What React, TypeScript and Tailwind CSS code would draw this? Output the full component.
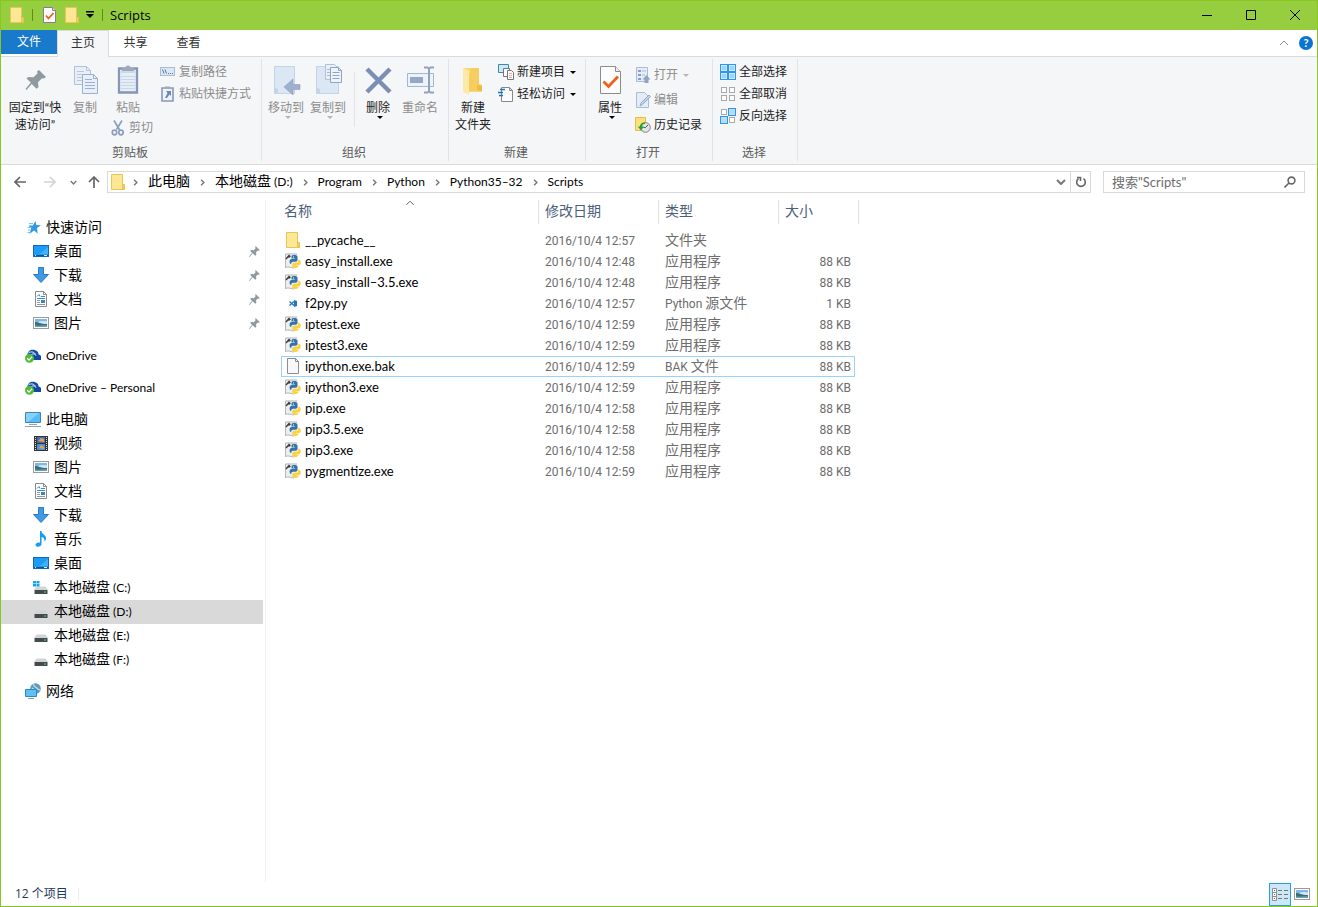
import React from "react";

type IconProps = { className?: string };

/* ---------- shared icons ---------- */

const Folder = ({ className = "w-4 h-4" }: IconProps) => (
  <svg className={className} viewBox="0 0 16 16">
    <path d="M1.500.5h11v10l2 .5v4.500h-13z" fill="#fde694" stroke="#e9c558" />
    <path d="M12.500 15v-5l2 .6V15z" fill="#f5d061" stroke="#e0b840" strokeWidth=".6" />
  </svg>
);

const CheckDoc = ({ className }: IconProps) => (
  <svg className={className} viewBox="0 0 13 16">
    <path d="M.5.5h9l3 3v12H.5z" fill="#fcfcfc" stroke="#8a7a9a" />
    <path d="M9.500.5v3h3" fill="#e8e8e8" stroke="#8a7a9a" />
    <path d="M3 8.500l2.500 3L10.500 6" fill="none" stroke="#f05a1a" strokeWidth="1.800" />
  </svg>
);

const Pin = ({ className }: IconProps) => (
  <svg className={className} viewBox="0 0 20 20" fill="#8f9aa0">
    <path d="M12 0l8 7.500-2.500 1-1.500-.3-3.200 3.300.5 4.700-1.800 1.500-4.700-4.600L1.200 20 0 19l5.500-6.500L2 8.800l2-1.600 4.700.3L12 4.200 11.500 2z" />
  </svg>
);

const Caret = ({ className = "text-black" }: IconProps) => (
  <svg className={`w-[6px] h-[3px] shrink-0 ${className}`} viewBox="0 0 6 3">
    <path d="M0 0h6L3 3z" fill="currentColor" />
  </svg>
);

const Chevron = ({ className }: IconProps) => (
  <svg className={className} viewBox="0 0 10 6" fill="none" stroke="currentColor">
    <path d="M1 1l4 4 4-4" />
  </svg>
);

const Picture = () => (
  <svg className="w-4 h-4" viewBox="0 0 16 16">
    <rect x=".5" y="2.500" width="15" height="11" fill="#fff" stroke="#9a9a9a" />
    <path d="M2 4h12v4H2z" fill="#7db8ee" />
    <path d="M6 6.500c3-1 6-.5 8 0V9H6z" fill="#d3e7f7" />
    <path d="M2 7c3 0 5 2 12 2v3H2z" fill="#3f6f6b" />
    <path d="M2 10.500c4 .5 8-.5 12 0V12H2z" fill="#6aa0b8" />
  </svg>
);

/* ---------- ribbon icons ---------- */

const page = { fill: "#e9eff8", stroke: "#b3c1d8" };

const BigPin = () => (
  <svg className="w-8 h-8" viewBox="0 0 32 32" fill="#8f9aa0">
    <path d="M20 6l7 7-2 1.500-2-.3-4 4 .5 5-2 1.500-4.800-4.700L7.500 26 6.500 25l5.300-6.500-4.300-4 1.700-1.600 5.300.3 4-3.700-.5-2z" />
  </svg>
);

const BigCopy = () => (
  <svg className="w-8 h-8" viewBox="0 0 32 32">
    <path d="M5.500 2.500h12l4 4v14h-16z" {...page} />
    <path d="M17.500 2.500v4h4M8 7.500h7M8 10.500h10M8 13.500h10M8 16.500h10" fill="none" stroke="#b9c7dc" />
    <path d="M13.500 10.500h11l4 4v15h-15z" fill="#e9eff8" stroke="#9bb0ce" />
    <path d="M24.500 10.500v4h4M16 15.500h7M16 18.500h10M16 21.500h10M16 24.500h10" fill="none" stroke="#9bb0ce" />
  </svg>
);

const BigPaste = () => (
  <svg className="w-8 h-8" viewBox="0 0 32 32">
    <path d="M7 4.500h18v24H7z" fill="#e6edf7" stroke="#8497b8" strokeWidth="2.300" />
    <path d="M9 12.500h14M9 15.500h14M9 18.500h14M9 21.500h14M9 24.500h14" stroke="#c8d6ea" />
    <path d="M10 7V4h3.500a2.500 2.500 0 0 1 5 0H22v3z" fill="#9faab9" />
    <path d="M9 8h14" stroke="#b8c3d3" />
  </svg>
);

const Scissors = () => (
  <svg className="w-4 h-4" viewBox="0 0 16 16" fill="none" stroke="#8c9fbd">
    <path d="M4 .5l6 10M12 .5L6.500 9.500" strokeWidth="1.700" />
    <ellipse cx="4.500" cy="12.500" rx="2.200" ry="2.300" strokeWidth="1.700" />
    <ellipse cx="11" cy="12.500" rx="2.200" ry="2.300" strokeWidth="1.700" />
  </svg>
);

const CopyPath = () => (
  <svg className="w-4 h-4" viewBox="0 0 16 16">
    <rect x=".5" y="3.500" width="14" height="8" fill="#dce7f5" stroke="#a9bbd6" />
    <path d="M2.500 5.500l1.500 4M5 5.500l1.500 4M8 9.500h1M10 9.500h1M12 9.500h1" fill="none" stroke="#5f7599" />
  </svg>
);

const PasteShortcut = () => (
  <svg className="w-4 h-4" viewBox="0 0 16 16">
    <path d="M2 2h11v13H2z" fill="#eef3fa" stroke="#869abb" strokeWidth="1.600" />
    <path d="M5 .5h5v2H5z" fill="#9faab9" />
    <path d="M6 5h5v5L9.500 8.500 7 12H5l2.500-5z" fill="#6f88b0" />
  </svg>
);

const BigMove = () => (
  <svg className="w-8 h-8" viewBox="0 0 32 32">
    <path d="M4.500 2.500h20v27h-20z" fill="#dce7f5" stroke="#c3d3e8" />
    <path d="M5 24l3 1v4H5z" fill="#c3d3e8" />
    <path d="M30 20.500h-7V15l-9 8 9 8v-5.500h7z" fill="#9db0cc" stroke="#8ba0c0" strokeWidth=".6" />
  </svg>
);

const BigCopyTo = () => (
  <svg className="w-8 h-8" viewBox="0 0 32 32">
    <path d="M4.500 2.500h22v27h-22z" fill="#dce7f5" stroke="#c3d3e8" />
    <path d="M5 24l3 1v4H5z" fill="#c3d3e8" />
    <path d="M13.500.5h9l3 3v12h-12z" {...page} />
    <path d="M15 5.500h5M15 8.500h5M15 11.500h5" stroke="#a9b9d2" />
    <path d="M18.500 3.500h8l3 3v12h-11z" fill="#eef3fa" stroke="#8fa5c6" />
    <path d="M26.500 3.500v3h3M20.500 8.500h7M20.500 11.500h7M20.500 14.500h7" fill="none" stroke="#8fa5c6" />
  </svg>
);

const BigDelete = () => (
  <svg className="w-8 h-8" viewBox="0 0 32 32">
    <path d="M5 5l23 23M28 5L5 28" stroke="#7b8fb4" strokeWidth="4.500" />
  </svg>
);

const BigRename = () => (
  <svg className="w-8 h-8" viewBox="0 0 32 32" fill="none">
    <path d="M3.500 9.500h26v13h-26z" fill="#edf2f9" stroke="#a3b6d2" />
    <path d="M6 13h13v6H6z" fill="#93a8c8" />
    <path d="M20 3.500h3.500l1.500 1 1.500-1H30M20 28.500h3.500l1.500-1 1.500 1H30M25 4v24" stroke="#8ea2c1" strokeWidth="2" />
  </svg>
);

const BigFolder = () => (
  <svg className="w-8 h-8" viewBox="0 0 32 32">
    <path d="M6 4h16v16l3 1v7H6z" fill="#f9d775" />
    <path d="M14 4h8v16l3 1v6H10z" fill="#f7cd62" />
    <path d="M6 4l6 3v24l-6-3z" fill="#fdeaa8" />
    <path d="M20 26v-5l5 1v5z" fill="#eebc45" />
  </svg>
);

const NewItem = () => (
  <svg className="w-4 h-4" viewBox="0 0 16 16">
    <path d="M.5.5h10v8H.5z" fill="#cbe8f7" stroke="#3d87a8" />
    <path d="M5.500 4.500h6v8h-6z" fill="#fff" stroke="#777" />
    <path d="M9.500 6.500h4l2 2v7h-6z" fill="#fff" stroke="#777" />
    <path d="M11 9.500h3M11 11.500h3M11 13.500h3" stroke="#e9a4a4" />
  </svg>
);

const EasyAccess = () => (
  <svg className="w-4 h-4" viewBox="0 0 16 16">
    <path d="M3.500 1.500h8l3 3v11h-11z" fill="#fcfcfc" stroke="#888" />
    <path d="M11.500 1.500v3h3" fill="none" stroke="#888" />
    <path d="M2 3.500h5M0 6.500h5M1 9.500h4" stroke="#1f76bd" strokeWidth="1.400" />
  </svg>
);

const BigProps = () => (
  <svg className="w-8 h-8" viewBox="0 0 32 32">
    <path d="M6.500 2.500h15l5 5v22h-20z" fill="#fdfdfd" stroke="#8c8c8c" />
    <path d="M21.500 2.500v5h5" fill="#eee" stroke="#8c8c8c" />
    <path d="M9.500 17.500l5 5L24 12.500" fill="none" stroke="#f0601c" strokeWidth="2.800" />
  </svg>
);

const OpenItem = () => (
  <svg className="w-4 h-4" viewBox="0 0 16 16">
    <path d="M1.500.5h11v14h-11z" fill="#e4ecf7" stroke="#a9bbd6" />
    <path d="M3 3h3v2H3zM3 7h3v2H3zM3 11h3v2H3z" fill="#8ba0c0" />
    <path d="M7 4h4M7 8h3" stroke="#a9bbd6" />
    <path d="M9.500 16v-3.500H7.500L11.500 8l4 4.500h-2V16z" fill="#90a5c5" />
  </svg>
);

const EditItem = () => (
  <svg className="w-4 h-4" viewBox="0 0 16 16">
    <path d="M1.500.5h8l4 4v11h-12z" fill="#e4ecf7" stroke="#a9bbd6" />
    <path d="M5 14l1-3 8-8 1.500 1.500-8 8z" fill="#c4d2e6" stroke="#97abc9" />
  </svg>
);

const HistoryItem = () => (
  <svg className="w-4 h-4" viewBox="0 0 16 16">
    <path d="M.5.5h10v13H.5z" fill="#fbe07c" stroke="#e3bd4d" />
    <circle cx="10.500" cy="10.500" r="4.800" fill="#e2e4e6" stroke="#7e8489" />
    <path d="M10.500 10.500l2.500-2.500M10.500 10.500h-2" stroke="#555" />
    <path d="M10 5.500C6.500 5.500 5 7.500 5 9.500H2.800L6 13.500l3-4H7.200C7.200 8 8 7 10 6.800z" fill="#22a52d" />
  </svg>
);

// each select icon is a 2x2 board, the listed cells are highlighted
const SelectBoard = ({ on, full }: { on: number[]; full?: boolean }) => (
  <svg className="w-4 h-4" viewBox="0 0 16 16">
    {full && <path d="M0 0h16v16H0z" fill="#2f96e8" />}
    {[0, 1, 2, 3].map((i) => {
      const x = (i % 2) * 8;
      const y = i > 1 ? 8 : 0;
      if (full) return <rect key={i} x={x + 1.5} y={y + 1.5} width="5" height="5" fill="#9dd3fb" stroke="#cbe8ff" />;
      return on.includes(i) ? (
        <rect key={i} x={x + 0.5} y={y + 0.5} width="7" height="7" fill="#b5defd" stroke="#2f96e8" />
      ) : (
        <rect key={i} x={x + 1.5} y={y + 1.5} width="5" height="5" fill="#fff" stroke="#a9a9a9" />
      );
    })}
  </svg>
);

/* ---------- navigation icons ---------- */

const Star = () => (
  <svg className="w-4 h-4" viewBox="0 0 16 16">
    <path d="M10.500 2l.8 4 4.700.3-4 2.700.7 5.500-3.700-3-4.500 3.500 1.700-5.400L3.500 6.500h4.300z" fill="#2f9be6" />
    <path d="M4 4.500h4M2.500 8.500h4M3 11h3M2.500 13.500h3" stroke="#7cc3f3" />
  </svg>
);

const Desktop = () => (
  <svg className="w-4 h-4" viewBox="0 0 16 16">
    <rect x=".5" y="2.500" width="15" height="11" fill="#1b9cf6" stroke="#0d6cb8" />
    <path d="M7 11L15 4v7z" fill="#43b0fa" />
    <path d="M1 12.500h14" stroke="#0b568f" />
    <path d="M2 12.500h1M11 12.500h3" stroke="#d6eefd" />
  </svg>
);

const Download = () => (
  <svg className="w-4 h-4" viewBox="0 0 16 16">
    <path d="M5.500.5h5v7h5L8 15.500.5 7.500h5z" fill="#3f9ae3" stroke="#2c7cc4" />
  </svg>
);

const Doc = () => (
  <svg className="w-4 h-4" viewBox="0 0 16 16">
    <path d="M2.500.5h8l3 3v12h-11z" fill="#fff" stroke="#8a8a8a" />
    <path d="M10.500.5v3h3" fill="none" stroke="#8a8a8a" />
    <path d="M4 5.500l2-2 1 2M8 5.500h4M4 7.500h8" fill="none" stroke="#2f8fd8" />
    <path d="M4 9.500h3M4 11.500h3M4 13.500h8" stroke="#8a9aa8" />
    <path d="M8 9h4v3H8z" fill="#4382b5" />
  </svg>
);

const Cloud = () => (
  <svg className="w-4 h-4" viewBox="0 0 16 16">
    <path d="M2.500 8C2.500 4 6 2 9.500 3c3 .5 4 2.500 4 4.500 3 .5 3.500 3 2.500 5.500H5z" fill="#0f4aa8" />
    <path d="M3.500 6C6 4 9.500 5 10.500 7.500M6 8c2-2 4-1 5 .5" fill="none" stroke="#fff" />
    <circle cx="4.500" cy="11.300" r="4.500" fill="#4fbb34" />
    <path d="M2.200 11.300l1.800 1.800 3-3.300" fill="none" stroke="#fff" strokeWidth="1.400" />
  </svg>
);

const Computer = () => (
  <svg className="w-4 h-4" viewBox="0 0 16 16">
    <path d="M.5 1.500h15v10H.5z" fill="#55bcf7" stroke="#3c85b4" />
    <path d="M1 2h13L3 11H1z" fill="#86d2fb" />
    <path d="M4 13.500h8M0 15.500h16" stroke="#93a2ae" />
  </svg>
);

const Video = () => (
  <svg className="w-4 h-4" viewBox="0 0 16 16">
    <path d="M1 1h14v15H1z" fill="#333" />
    <path d="M4 2h8v6H4z" fill="#4a68c8" />
    <path d="M4 9h8v6H4z" fill="#4f8fe0" />
    <path d="M5 6l3-3 3 1v3zM6 13l2-3 3 2v2z" fill="#e0a53a" />
    <path d="M2.500 2v13M13.500 2v13" stroke="#ddd" strokeDasharray="1 1" />
  </svg>
);

const Music = () => (
  <svg className="w-4 h-4" viewBox="0 0 16 16" fill="#159cf5">
    <path d="M7 0h1.500c0 3.500 5 4 4.500 7.500 0 1.500-1 2.500-1.500 3 .3-3-1-4-3-4.500V13C8.500 16 3 17 2.500 14c0-2 2.500-3 4.500-2.300z" />
  </svg>
);

const Drive = ({ win }: { win?: boolean }) => (
  <svg className="w-4 h-4" viewBox="0 0 16 16">
    <path d="M3.500 7.500h9L15 11H1z" fill="#d2d5d8" />
    <path d="M1.500 11h13v4h-13z" fill="#454a4e" />
    <path d="M11 12.500h2v1h-2z" fill="#41e05a" />
    {win && <path d="M0 2h3v2.500H0zM3.500 2h3v2.500h-3zM0 5h3v2.500H0zM3.500 5h3v2.500h-3z" fill="#12a5ee" />}
  </svg>
);

const Network = () => (
  <svg className="w-4 h-4" viewBox="0 0 16 16">
    <circle cx="10.500" cy="5.500" r="5.300" fill="#5d9bbd" />
    <path d="M8 1.500c2 1 1 2 3 3s2 3 4 2M7 5l3 3" fill="none" stroke="#c5dfec" strokeWidth="1.300" />
    <path d="M.5 6.500h11v7H.5z" fill="#5ec0f8" stroke="#2f86bd" />
    <path d="M3 15.500h6" stroke="#8ba0ae" />
  </svg>
);

/* ---------- file icons ---------- */

const PythonExe = () => (
  <svg className="w-4 h-4" viewBox="0 0 16 16">
    <path d="M0 .5h12.500V15L6 14l-6 .5z" fill="#eceeef" />
    <path d="M.5 14.500V1H12M0 14.500c4-1.500 6 .5 9 .5" fill="none" stroke="#b4b8bb" />
    <path d="M1 6l3.500-4M3.500 4.500l2-1.500" stroke="#3c3c3c" strokeWidth="1.400" />
    <path d="M6.500 3.500c0-2 6-2 6 .3V7c0 1.300-.8 1.700-2 1.700H8c-1.500 0-1.800 1-1.800 2.300C4 11 4 6 6.500 6H10v-.6H6.500z" fill="#3572a5" />
    <path d="M13.300 6.500c3.200 0 3.200 5.500.4 5.500h-3v.6h3c0 3-6.500 3-6.500.3 0-2 .5-3.200 2-3.200h2.500c1.300 0 1.600-1 1.600-3.200z" fill="#fbd13c" />
    <path d="M8 3.500h1v1H8z" fill="#fff" />
  </svg>
);

const VsCode = () => (
  <svg className="w-4 h-4" viewBox="0 0 16 16">
    <path d="M3 1h9v14H3z" fill="#fafafa" />
    <path d="M4.500 6.500l4.500 4M4.500 10.500l4.500-4" stroke="#1f78bf" strokeWidth="1.300" />
    <path d="M9 5l3 1v5l-3 1z" fill="#1f78bf" />
  </svg>
);

const BlankFile = () => (
  <svg className="w-4 h-4" viewBox="0 0 16 16">
    <path d="M2.500.5h8l3 3v12h-11z" fill="#f8f8f9" stroke="#8e8e8e" />
    <path d="M10.500.5v3h3" fill="none" stroke="#8e8e8e" />
  </svg>
);

/* ---------- data ---------- */

const EXE = "应用程序";

const FILES = [
  { name: "__pycache__", date: "2016/10/4 12:57", type: "文件夹", size: "", icon: Folder },
  { name: "easy_install.exe", date: "2016/10/4 12:48", type: EXE, size: "88 KB", icon: PythonExe },
  { name: "easy_install–3.5.exe", date: "2016/10/4 12:48", type: EXE, size: "88 KB", icon: PythonExe },
  { name: "f2py.py", date: "2016/10/4 12:57", type: "Python 源文件", size: "1 KB", icon: VsCode },
  { name: "iptest.exe", date: "2016/10/4 12:59", type: EXE, size: "88 KB", icon: PythonExe },
  { name: "iptest3.exe", date: "2016/10/4 12:59", type: EXE, size: "88 KB", icon: PythonExe },
  { name: "ipython.exe.bak", date: "2016/10/4 12:59", type: "BAK 文件", size: "88 KB", icon: BlankFile, focused: true },
  { name: "ipython3.exe", date: "2016/10/4 12:59", type: EXE, size: "88 KB", icon: PythonExe },
  { name: "pip.exe", date: "2016/10/4 12:58", type: EXE, size: "88 KB", icon: PythonExe },
  { name: "pip3.5.exe", date: "2016/10/4 12:58", type: EXE, size: "88 KB", icon: PythonExe },
  { name: "pip3.exe", date: "2016/10/4 12:58", type: EXE, size: "88 KB", icon: PythonExe },
  { name: "pygmentize.exe", date: "2016/10/4 12:59", type: EXE, size: "88 KB", icon: PythonExe },
];

const NAV = [
  {
    title: "快速访问",
    icon: <Star />,
    items: [
      { title: "桌面", icon: <Desktop />, pinned: true },
      { title: "下载", icon: <Download />, pinned: true },
      { title: "文档", icon: <Doc />, pinned: true },
      { title: "图片", icon: <Picture />, pinned: true },
    ],
  },
  { title: "OneDrive", icon: <Cloud />, items: [] },
  { title: "OneDrive – Personal", icon: <Cloud />, items: [] },
  {
    title: "此电脑",
    icon: <Computer />,
    items: [
      { title: "视频", icon: <Video /> },
      { title: "图片", icon: <Picture /> },
      { title: "文档", icon: <Doc /> },
      { title: "下载", icon: <Download /> },
      { title: "音乐", icon: <Music /> },
      { title: "桌面", icon: <Desktop /> },
      { title: "本地磁盘 (C:)", icon: <Drive win /> },
      { title: "本地磁盘 (D:)", icon: <Drive />, active: true },
      { title: "本地磁盘 (E:)", icon: <Drive /> },
      { title: "本地磁盘 (F:)", icon: <Drive /> },
    ],
  },
  { title: "网络", icon: <Network />, items: [] },
];

const CRUMBS = ["此电脑", "本地磁盘 (D:)", "Program", "Python", "Python35–32", "Scripts"];

/* ---------- building blocks ---------- */

// latin runs are set smaller than the chinese text around them
const Mixed = ({ text, latin = "text-[12px]" }: { text: string; latin?: string }) => (
  <span className="text-[14px] whitespace-pre">
    {text.split(/([\x20-\x7e–]+)/).map((part, i) =>
      i % 2 ? (
        <span key={i} className={latin}>
          {part}
        </span>
      ) : (
        part
      )
    )}
  </span>
);

function RibbonGroup({ label, className, children }: { label: string; className: string; children: React.ReactNode }) {
  return (
    <div className={`relative flex flex-col h-[107px] shrink-0 ${className}`}>
      <div className="flex h-[86px]">{children}</div>
      <div className="h-5 pr-[3px] leading-5 text-center text-[#5a5a5a]">{label}</div>
      <div className="absolute right-0 top-[2px] bottom-[3px] w-px bg-[#e1e3e5]" />
    </div>
  );
}

type BigButtonProps = { icon: React.ReactNode; className: string; disabled?: boolean; menu?: boolean; children: React.ReactNode };

function BigButton({ icon, className, disabled, menu, children }: BigButtonProps) {
  return (
    <button
      disabled={disabled}
      className={`flex flex-col items-center shrink-0 pt-[7px] leading-[17px] disabled:text-[#8d8d8d] ${className}`}
    >
      {icon}
      <span className="mt-[3px] whitespace-nowrap">{children}</span>
      {menu && <Caret className={disabled ? "ml-1 text-[#b5b5b5]" : "ml-1 text-black"} />}
    </button>
  );
}

type SmallButtonProps = { icon: React.ReactNode; disabled?: boolean; menu?: boolean; children: React.ReactNode };

function SmallButton({ icon, disabled, menu, children }: SmallButtonProps) {
  return (
    <button disabled={disabled} className="flex items-center gap-[3px] h-[22px] whitespace-nowrap disabled:text-[#8d8d8d]">
      {icon}
      {children}
      {menu && <Caret className={disabled ? "ml-[2px] text-[#b5b5b5]" : "ml-[2px] text-black"} />}
    </button>
  );
}

function TitleBar() {
  return (
    <header className="flex items-center h-[29px] bg-[#96ce40]">
      <div className="flex items-center pb-[2px]">
        <Folder className="ml-2 w-4 h-4" />
        <div className="ml-[7px] w-px h-3 bg-[#5f8a22]" />
        <button aria-label="属性" className="ml-[10px]">
          <CheckDoc className="w-[13px] h-4" />
        </button>
        <button aria-label="新建文件夹" className="ml-2">
          <Folder className="w-4 h-4" />
        </button>
        <button aria-label="自定义快速访问工具栏" className="ml-[6px]">
          <svg className="w-[8px] h-[7px]" viewBox="0 0 8 7">
            <path d="M0 0h8v1.500H0zM0 3h8L4 7z" />
          </svg>
        </button>
        <div className="ml-2 w-px h-3 bg-[#5f8a22]" />
        <h1 className="ml-[7px] text-[13px] font-['Open_Sans','Noto_Sans',sans-serif]">Scripts</h1>
      </div>
      <div className="ml-auto flex h-full pb-px">
        {[
          ["最小化", "M0 5.500h10"],
          ["最大化", "M.5.5h9v9h-9z"],
          ["关闭", "M0 0l10 10M10 0L0 10"],
        ].map(([label, d]) => (
          <button key={label} aria-label={label} className="w-11 flex items-center justify-center">
            <svg className="w-[10px] h-[10px]" viewBox="0 0 10 10" fill="none" stroke="#000">
              <path d={d} />
            </svg>
          </button>
        ))}
      </div>
    </header>
  );
}

function Tabs() {
  return (
    <nav className="flex h-[27px] border-b border-[#dadbdc] text-[#333]">
      <button className="w-14 h-6 bg-[#1979ca] text-white">文件</button>
      <button className="w-[52px] h-[27px] pb-[2px] border-x border-t border-[#dadbdc] bg-[#f5f6f7]">主页</button>
      <button className="w-[53px]">共享</button>
      <button className="w-[53px]">查看</button>
      <div className="ml-auto flex items-center gap-[10px] pr-1">
        <button aria-label="最小化功能区">
          <Chevron className="w-[10px] h-[6px] rotate-180 text-[#8a8a8a]" />
        </button>
        <button aria-label="帮助" className="w-[14px] h-[14px] leading-[14px] rounded-full bg-[#0a74d2] text-white text-[11px] font-bold">
          ?
        </button>
      </div>
    </nav>
  );
}

function Ribbon() {
  return (
    <section className="flex h-[108px] bg-[#f5f6f8] border-b border-[#dadbdc] text-[#222]">
      <RibbonGroup label="剪贴板" className="w-[261px]">
        <BigButton icon={<BigPin />} className="ml-[3px] w-[62px]">
          固定到“快
          <br />
          速访问”
        </BigButton>
        <BigButton icon={<BigCopy />} className="ml-px w-9" disabled>
          复制
        </BigButton>
        <div className="ml-[7px] flex flex-col items-start gap-px">
          <BigButton icon={<BigPaste />} className="w-9" disabled>
            粘贴
          </BigButton>
          <SmallButton icon={<Scissors />} disabled>
            剪切
          </SmallButton>
        </div>
        <div className="ml-[7px] pt-1 flex flex-col items-start">
          <SmallButton icon={<CopyPath />} disabled>
            复制路径
          </SmallButton>
          <SmallButton icon={<PasteShortcut />} disabled>
            粘贴快捷方式
          </SmallButton>
        </div>
      </RibbonGroup>

      <RibbonGroup label="组织" className="w-[187px]">
        <BigButton icon={<BigMove />} className="ml-[3px] w-[42px]" disabled menu>
          移动到
        </BigButton>
        <BigButton icon={<BigCopyTo />} className="w-[42px]" disabled menu>
          复制到
        </BigButton>
        <div className="ml-[5px] mr-[2px] mt-[15px] w-px h-[55px] bg-[#e1e3e5]" />
        <BigButton icon={<BigDelete />} className="w-[42px]" menu>
          删除
        </BigButton>
        <BigButton icon={<BigRename />} className="w-[42px]" disabled>
          重命名
        </BigButton>
      </RibbonGroup>

      <RibbonGroup label="新建" className="w-[137px]">
        <BigButton icon={<BigFolder />} className="ml-[3px] w-[42px]">
          新建
          <br />
          文件夹
        </BigButton>
        <div className="ml-1 pt-1 flex flex-col items-start">
          <SmallButton icon={<NewItem />} menu>
            新建项目
          </SmallButton>
          <SmallButton icon={<EasyAccess />} menu>
            轻松访问
          </SmallButton>
        </div>
      </RibbonGroup>

      <RibbonGroup label="打开" className="w-[127px]">
        <BigButton icon={<BigProps />} className="ml-[3px] w-[42px]" menu>
          属性
        </BigButton>
        <div className="ml-1 pt-[7px] flex flex-col items-start gap-[3px]">
          <SmallButton icon={<OpenItem />} disabled menu>
            打开
          </SmallButton>
          <SmallButton icon={<EditItem />} disabled>
            编辑
          </SmallButton>
          <SmallButton icon={<HistoryItem />}>历史记录</SmallButton>
        </div>
      </RibbonGroup>

      <RibbonGroup label="选择" className="w-[85px]">
        <div className="ml-[7px] pt-1 flex flex-col items-start">
          <SmallButton icon={<SelectBoard on={[]} full />}>全部选择</SmallButton>
          <SmallButton icon={<SelectBoard on={[]} />}>全部取消</SmallButton>
          <SmallButton icon={<SelectBoard on={[1, 2]} />}>反向选择</SmallButton>
        </div>
      </RibbonGroup>
    </section>
  );
}

const Arrow = ({ d, className }: { d: string; className: string }) => (
  <svg className={`w-3 h-3 ${className}`} viewBox="0 0 12 12" fill="none" stroke="currentColor" strokeWidth="1.700">
    <path d={d} />
  </svg>
);

function AddressRow() {
  return (
    <div className="flex items-center h-[34px] mb-px pl-[13px] pr-3">
      <button aria-label="后退">
        <Arrow d="M12 6H1M6 1L1 6l5 5" className="text-[#666]" />
      </button>
      <button aria-label="前进" className="ml-[18px]">
        <Arrow d="M0 6h11M6 1l5 5-5 5" className="text-[#d4d4d4]" />
      </button>
      <button aria-label="最近浏览的位置" className="ml-[14px]">
        <Chevron className="w-[7px] h-[5px] stroke-2 text-[#777]" />
      </button>
      <button aria-label="上移" className="ml-[11px]">
        <Arrow d="M6 12V1M1 6l5-5 5 5" className="text-[#666]" />
      </button>

      <div className="ml-[7px] flex flex-1 items-center h-[22px] border border-[#d9d9d9]">
        <Folder className="ml-[2px] w-4 h-4" />
        {CRUMBS.map((crumb) => (
          <React.Fragment key={crumb}>
            <Chevron className="mx-[6px] w-[7px] h-[5px] -rotate-90 stroke-2 text-[#777]" />
            <a href="#" className="px-[3px] leading-4 pb-[2px]">
              <Mixed text={crumb} />
            </a>
          </React.Fragment>
        ))}
        <button aria-label="以前的位置" className="ml-auto pr-1">
          <Chevron className="w-[10px] h-[6px] stroke-2 text-[#777]" />
        </button>
        <button aria-label="刷新" className="w-5 h-full flex items-center justify-center border-l border-[#d9d9d9]">
          <svg className="w-3 h-3" viewBox="0 0 12 12" fill="none" stroke="#666" strokeWidth="1.600">
            <path d="M8.500 2.600a4.300 4.300 0 1 1-5 0M2 1.500h3.500V5" />
          </svg>
        </button>
      </div>

      <label className="ml-3 flex items-center w-[202px] h-[22px] px-2 border border-[#d9d9d9]">
        <input
          type="text"
          aria-label="搜索"
          placeholder={'搜索"Scripts"'}
          className="flex-1 min-w-0 pb-px text-[13px] outline-none placeholder:text-[#6d6d6d]"
        />
        <svg className="w-3 h-3" viewBox="0 0 12 12" fill="none" stroke="#666" strokeWidth="1.600">
          <circle cx="7.500" cy="4.500" r="3.400" />
          <path d="M5 7L.5 11.500" />
        </svg>
      </label>
    </div>
  );
}

function NavPane() {
  return (
    <aside className="w-[265px] shrink-0 pt-4 pr-[2px] border-r border-[#f0f0f0] flex flex-col gap-2">
      {NAV.map((group) => (
        <div key={group.title}>
          <a href="#" className="flex items-center gap-[5px] h-6 pb-[2px] pl-6">
            {group.icon}
            <Mixed text={group.title} />
          </a>
          {group.items.map((item) => (
            <a
              key={item.title}
              href="#"
              className={`flex items-center gap-[5px] h-6 pb-[2px] pl-8 pr-[3px] ${"active" in item ? "bg-[#d9d9d9]" : ""}`}
            >
              {item.icon}
              <Mixed text={item.title} />
              {"pinned" in item && <Pin className="ml-auto w-[11px] h-[11px]" />}
            </a>
          ))}
        </div>
      ))}
    </aside>
  );
}

const CELL_LATIN = "text-[12px] font-['Roboto',sans-serif]";

function FileList() {
  return (
    <main className="flex-1 pl-[15px]">
      <table className="table-fixed w-[578px] border-collapse">
        <colgroup>
          <col className="w-[258px]" />
          <col className="w-[120px]" />
          <col className="w-[120px]" />
          <col className="w-[80px]" />
        </colgroup>
        <thead className="text-left text-[14px] text-[#4c607a]">
          <tr>
            {["名称", "修改日期", "类型", "大小"].map((title, i) => (
              <th key={title} className="p-0 pb-[6px] font-normal">
                <div className={`relative h-6 leading-[22px] border-r border-[#e2e2e2] ${i ? "pl-[6px]" : "pl-[3px]"}`}>
                  {title}
                  {i === 0 && <Chevron className="absolute left-1/2 top-0 -translate-x-1/2 w-[9px] h-[6px] rotate-180 text-[#555]" />}
                </div>
              </th>
            ))}
          </tr>
        </thead>
        <tbody className="text-[#6d6d6d]">
          {FILES.map((file) => {
            const Icon = file.icon;
            return (
              <tr
                key={file.name}
                className={
                  file.focused
                    ? "relative after:absolute after:left-0 after:right-1 after:inset-y-0 after:border after:border-[#99d1ff]"
                    : ""
                }
              >
                <td className="p-0 h-[21px] align-top">
                  <div className="flex items-center gap-1 h-5 pl-1 text-black">
                    <Icon />
                    <Mixed text={file.name} latin="text-[13px]" />
                  </div>
                </td>
                <td className="p-0 pl-[6px] leading-5">
                  <Mixed text={file.date} latin={CELL_LATIN} />
                </td>
                <td className="p-0 pl-[6px] leading-5">
                  <Mixed text={file.type} latin={CELL_LATIN} />
                </td>
                <td className="p-0 pr-2 leading-5 text-right">
                  <Mixed text={file.size} latin={CELL_LATIN} />
                </td>
              </tr>
            );
          })}
        </tbody>
      </table>
    </main>
  );
}

function StatusBar() {
  return (
    <footer className="flex items-center h-6 pl-[14px] text-[#1e395b] font-['Open_Sans','Noto_Sans_CJK_SC',sans-serif]">
      12 个项目
      <div className="ml-[10px] w-px h-3 bg-[#eee]" />
      <div className="ml-auto flex items-center pr-[7px]">
        <button aria-label="详细信息" className="w-[22px] h-[23px] flex items-center justify-center border border-[#2a9fd8] bg-[#cce8f6]">
          <svg className="w-4 h-[13px]" viewBox="0 0 16 13" fill="none">
            <path d="M.5.5h4v12h-4zM.5 4.500h4M.5 8.500h4" fill="#fff" stroke="#8e8e8e" />
            <path d="M6 2.500h4M12 2.500h4M6 6.500h4M12 6.500h4M6 10.500h4M12 10.500h4" stroke="#777" />
            <path d="M2 2h1v1H2z" fill="#555" />
            <path d="M2 6h1v1H2z" fill="#2a80d0" />
            <path d="M2 10h1v1H2z" fill="#d03030" />
          </svg>
        </button>
        <button aria-label="大图标" className="ml-[3px]">
          <Picture />
        </button>
      </div>
    </footer>
  );
}

export default function App() {
  return (
    <div className="min-h-screen flex flex-col border border-[#86c820] bg-white text-black text-[12px] leading-4 font-['Lato','Noto_Sans_CJK_SC',sans-serif] [&_svg]:shrink-0">
      <TitleBar />
      <Tabs />
      <Ribbon />
      <AddressRow />
      <div className="flex flex-1">
        <NavPane />
        <FileList />
      </div>
      <StatusBar />
    </div>
  );
}
